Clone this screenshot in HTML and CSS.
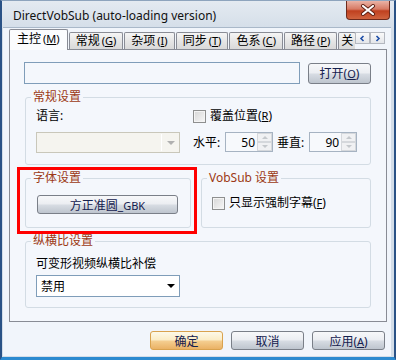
FILE: index.html
```html
<!DOCTYPE html>
<html lang="zh">
<head>
  <meta charset="UTF-8" />
  <title>DirectVobSub</title>
  <link rel="stylesheet" href="styles.css">
</head>
<body>
  <div class="window">
    <div class="titlebar">
      <span class="title">DirectVobSub (auto-loading version)</span>
      <button class="close">
        <svg width="16" height="12" viewBox="0 0 16 12">
          <path d="M3 2 L13 10 M13 2 L3 10" stroke="#5a1e12" stroke-width="4" stroke-linecap="round"/>
          <path d="M3 2 L13 10 M13 2 L3 10" stroke="#fff" stroke-width="2.2" stroke-linecap="round"/>
        </svg>
      </button>
    </div>

    <div class="client">
      <div class="tabs">
        <div class="tablist">
          <div class="tab active">主控<span class="key">(<u>M</u>)</span></div>
          <div class="tab">常规<span class="key">(<u>G</u>)</span></div>
          <div class="tab">杂项<span class="key">(<u>I</u>)</span></div>
          <div class="tab">同步<span class="key">(<u>T</u>)</span></div>
          <div class="tab">色系<span class="key">(<u>C</u>)</span></div>
          <div class="tab">路径<span class="key">(<u>P</u>)</span></div>
          <div class="tab last">关</div>
        </div>
        <div class="scroller">
          <span class="arrow"><svg width="7" height="7" viewBox="0 0 7 7"><path d="M4.5 1 L2 3.5 L4.5 6" stroke="#1f4fa8" stroke-width="1.6" fill="none"/></svg></span>
          <span class="arrow"><svg width="7" height="7" viewBox="0 0 7 7"><path d="M2.5 1 L5 3.5 L2.5 6" stroke="#1f4fa8" stroke-width="1.6" fill="none"/></svg></span>
        </div>
      </div>

      <div class="page">
        <div class="file-row">
          <input class="path" type="text" />
          <button class="btn open">打开(<u>O</u>)</button>
        </div>

        <fieldset class="group general">
          <legend>常规设置</legend>
          <div class="cols">
            <div class="col-left">
              <div class="line">语言:</div>
              <div class="combo disabled"><span class="combo-arrow"></span></div>
            </div>
            <div class="col-right">
              <label class="line check"><span class="box"></span>覆盖位置(<u>R</u>)</label>
              <div class="spin-row">
                <span>水平:</span>
                <div class="spin"><span class="num">50</span><span class="spin-btns"><i class="up"></i><i class="down"></i></span></div>
                <span class="spin-label">垂直:</span>
                <div class="spin"><span class="num">90</span><span class="spin-btns"><i class="up"></i><i class="down"></i></span></div>
              </div>
            </div>
          </div>
        </fieldset>

        <div class="row2">
          <div class="annot">
            <fieldset class="group font">
              <legend>字体设置</legend>
              <button class="btn font-btn">方正准圆_<span class="small">GBK</span></button>
            </fieldset>
          </div>
          <fieldset class="group vobsub">
            <legend>VobSub 设置</legend>
            <label class="line check"><span class="box"></span>只显示强制字幕(<u>F</u>)</label>
          </fieldset>
        </div>

        <fieldset class="group aspect">
          <legend>纵横比设置</legend>
          <div class="line">可变形视频纵横比补偿</div>
          <div class="combo select"><span class="value">禁用</span><span class="combo-arrow dark"></span></div>
        </fieldset>
      </div>

      <div class="actions">
        <button class="btn default">确定</button>
        <button class="btn">取消</button>
        <button class="btn">应用(<u>A</u>)</button>
      </div>
    </div>
  </div>
</body>
</html>
```

FILE: styles.css
```css
body {
  margin: 0;
  font-family: "Noto Sans", "Noto Sans CJK SC", sans-serif;
  font-size: 12px;
  color: #000;
}
.window {
  width: 396px;
  height: 360px;
  box-sizing: border-box;
  display: flex;
  flex-direction: column;
  background: linear-gradient(#e4eaf1, #d3dde8 30px);
  border-left: 2px solid #2a5286;
  border-right: 2px solid #2a5286;
  border-bottom: 3px solid #2b8ad0;
  border-top: 1px solid #8ea4bd;
  padding: 0 3px 1px 1px;
}
.titlebar {
  height: 26px;
  display: flex;
  align-items: flex-start;
}
.title {
  margin: 6px 0 0 10px;
  font-size: 12px;
  color: #111;
}
.close {
  margin-left: auto;
  margin-right: 1px;
  width: 44px;
  height: 19px;
  padding: 0;
  border: 1px solid #6e2a1c;
  border-top: none;
  border-radius: 0 0 4px 4px;
  background: linear-gradient(#eab3a6, #d77a64 45%, #c0401f 55%, #d0643f);
  display: flex;
  align-items: center;
  justify-content: center;
}
.client {
  flex: 1;
  background: #f1f5fb;
  border-top: 1px solid #a9b8c9;
  padding: 1px 4px 0 6px;
  display: flex;
  flex-direction: column;
}

/* pestañas */
.tabs {
  display: flex;
  height: 21px;
  margin-bottom: -1px;
  position: relative;
  z-index: 1;
}
.tablist {
  flex: 1;
  display: flex;
  align-items: flex-end;
  overflow: hidden;
}
.tab {
  flex: none;
  height: 17px;
  line-height: 16px;
  margin: 0 1px 1px 0;
  padding: 0 6px;
  box-sizing: border-box;
  border: 1px solid #898c95;
  border-bottom: none;
  border-radius: 2px 2px 0 0;
  background: linear-gradient(#f5f5f5, #e6e6e6 50%, #d9d9d9);
  white-space: nowrap;
}
.tab .key {
  margin-left: 2px;
  font-size: 11px;
}
.tab.active {
  height: 21px;
  line-height: 18px;
  margin-bottom: 0;
  padding: 0 7px 0 7px;
  background: #fbfcfe;
}
.tab.last {
  flex: 1;
  margin-right: 0;
  padding: 0 2px;
}
.btn u, .check u {
  font-size: 11px;
}
.scroller {
  display: flex;
  align-self: flex-start;
  margin: 3px 2px 0 0;
}
.arrow {
  width: 15px;
  height: 12px;
  box-sizing: border-box;
  border: 1px solid #b4b8c0;
  background: linear-gradient(#fafafa, #e4e6ea);
  display: flex;
  align-items: center;
  justify-content: center;
}

/* página */
.page {
  border: 1px solid #898c95;
  background: #f4f7fc;
  padding: 12px 15px 13px 15px;
}
.file-row {
  display: flex;
  align-items: center;
  gap: 8px;
}
.path {
  flex: 1;
  margin: 0 0 0 -1px;
  height: 22px;
  box-sizing: border-box;
  border: 1px solid #7f9db9;
  background: #f4f7fc;
}
.btn {
  font: inherit;
  color: #14204e;
  height: 21px;
  padding: 0;
  box-sizing: border-box;
  border: 1px solid #7a7f88;
  border-radius: 3px;
  background: linear-gradient(#f7f8fa, #eceef2 45%, #d6dbe2 55%, #bec5ce);
}
.open {
  width: 63px;
}
.group {
  margin: 6px 0 0 0;
  padding: 4px 10px 11px 10px;
  border: 1px solid #d3dce4;
  border-radius: 3px;
  min-width: 0;
}
.group legend {
  margin-left: -5px;
  padding: 0 2px;
  line-height: 14px;
  color: #9c3914;
}
.line {
  height: 16px;
  line-height: 16px;
}
.cols {
  display: flex;
  gap: 13px;
}
.col-left {
  width: 144px;
}
.combo {
  margin-top: 8px;
  height: 21px;
  box-sizing: border-box;
  display: flex;
  align-items: center;
}
.combo.disabled {
  border: 1px solid #c9c7ba;
  background: #f5f4ef;
}
.combo.disabled::before {
  content: "";
  margin-left: auto;
  width: 1px;
  height: 17px;
  background: #ffffff;
}
.combo-arrow {
  width: 17px;
  display: flex;
  justify-content: center;
}
.combo-arrow::after {
  content: "";
  border-left: 4px solid transparent;
  border-right: 4px solid transparent;
  border-top: 4px solid #b0b0b0;
}
.combo-arrow.dark::after {
  border-top-color: #000;
}
.col-right {
  flex: 1;
}
.check {
  display: flex;
  align-items: center;
}
.box {
  width: 13px;
  height: 13px;
  box-sizing: border-box;
  border: 1px solid #8e8f8f;
  background: linear-gradient(135deg, #d6d6d6, #f7f7f7);
  box-shadow: inset 0 0 0 1px #f4f4f4;
  margin-right: 4px;
}
.spin-row {
  margin-top: 8px;
  display: flex;
  align-items: center;
}
.spin-row > span:first-child {
  width: 32px;
}
.spin {
  width: 48px;
  height: 20px;
  box-sizing: border-box;
  border: 1px solid #a6b3c2;
  background: #f7f9fc;
  display: flex;
  align-items: center;
}
.spin .num {
  flex: 1;
  text-align: right;
  padding-right: 2px;
}
.spin-btns {
  width: 15px;
  height: 18px;
  display: flex;
  flex-direction: column;
}
.spin-btns i {
  flex: 1;
  border: 1px solid #d5d8dc;
  background: #f0f1f3;
  display: flex;
  align-items: center;
  justify-content: center;
}
.spin-btns i::after {
  content: "";
  border-left: 3px solid transparent;
  border-right: 3px solid transparent;
}
.spin-btns .up::after {
  border-bottom: 3px solid #c4c8cc;
}
.spin-btns .down::after {
  border-top: 3px solid #c4c8cc;
}
.spin-label {
  margin: 0 5px 0 4px;
}
.row2 {
  display: flex;
  gap: 10px;
  margin-top: 6px;
}
.row2 .group {
  margin-top: 0;
}
.annot {
  position: relative;
  width: 166px;
  display: flex;
}
.annot .group {
  flex: 1;
  padding: 10px 10px 13px 11px;
}
.annot .group legend {
  margin-left: -6px;
}
.annot::after {
  content: "";
  position: absolute;
  top: -4px;
  left: -8px;
  right: -6px;
  bottom: -6px;
  border: 3px solid #f00;
}
.font-btn {
  width: 141px;
  height: 19px;
}
.font-btn .small {
  font-size: 11px;
}
.vobsub {
  flex: 1;
  padding-top: 10px;
}
.aspect {
  padding-top: 8px;
  padding-bottom: 10px;
}
.combo.select {
  margin-top: 3px;
  width: 144px;
  height: 22px;
  border: 1px solid #7f9db9;
  background: #fff;
}
.combo.select .value {
  flex: 1;
  padding-left: 4px;
}
.actions {
  display: flex;
  justify-content: flex-end;
  gap: 8px;
  margin-top: 9px;
  padding-right: 2px;
}
.actions .btn {
  width: 73px;
  height: 19px;
}
.actions .btn.default {
  border-color: #d9a24e;
  background: linear-gradient(#fdf9e8, #fbedc7 45%, #f4cd8f 55%, #eab265);
}
```
